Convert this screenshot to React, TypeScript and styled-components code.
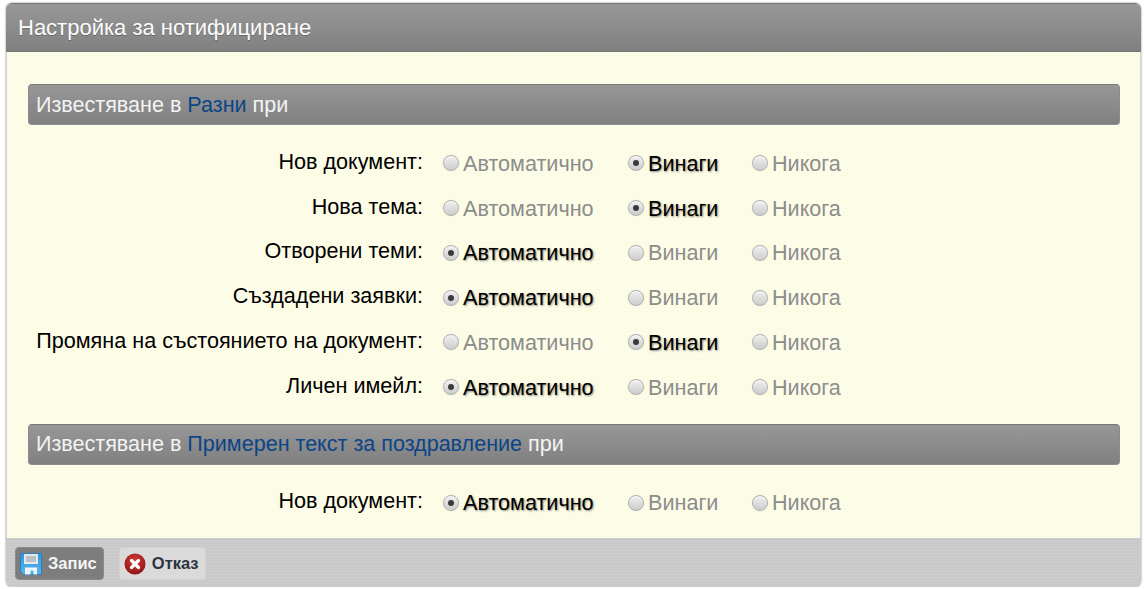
import React from "react";
import styled, { createGlobalStyle } from "styled-components";

const Global = createGlobalStyle`
  html, body { margin: 0; padding: 0; background: #fff; }
  body { font-family: "Liberation Sans", Arial, sans-serif; }
`;

const Panel = styled.div`
  box-sizing: border-box;
  width: 1135px;
  height: 584px;
  margin: 3px 0 0 6px;
  border-radius: 6px;
  overflow: hidden;
  display: flex;
  flex-direction: column;
  box-shadow: 0 0 2px rgba(0, 0, 0, 0.55);
`;

const Header = styled.div`
  box-sizing: border-box;
  height: 49px;
  flex: none;
  padding-left: 12px;
  display: flex;
  align-items: center;
  font-size: 22px;
  color: #fdfdfd;
  background: linear-gradient(#989898, #808080);
  border-top: 1px solid #777;
  border-bottom: 1px solid #777;
  text-shadow: 0 1px 0 rgba(70, 70, 70, 0.5);
`;

const Body = styled.div`
  flex: 1;
  min-height: 0;
  box-sizing: border-box;
  padding: 32px 20px 0 21px;
  border-left: 1px solid #d6d6d6;
  border-right: 1px solid #d6d6d6;
  background-color: #fcfce3;
  background-image:
    repeating-linear-gradient(0deg, rgba(255, 255, 255, 0.3) 0 1px, transparent 1px 3px),
    repeating-linear-gradient(90deg, rgba(255, 255, 255, 0.12) 0 2px, transparent 2px 5px);
`;

const Legend = styled.div`
  box-sizing: border-box;
  height: 41px;
  padding-left: 7px;
  display: flex;
  align-items: center;
  white-space: pre;
  font-size: 21.55px;
  color: #f4f4f4;
  border: 1px solid #8c8c8c;
  border-top-color: #777;
  border-radius: 4px;
  background: linear-gradient(#979797, #808080);
  box-shadow: 0 1px 0 rgba(255, 255, 255, 0.5);
`;

const LegendLink = styled.a`
  color: #0b4588;
`;

const Rows = styled.div<{ $rows: number }>`
  display: grid;
  grid-template-columns: 395px 185px 124px 1fr;
  grid-auto-rows: 44.75px;
  padding: 16.5px 0 ${(p) => (p.$rows > 1 ? "13.5px" : "0")};
`;

const Label = styled.div`
  justify-self: end;
  align-self: center;
  font-size: 21.6px;
  line-height: 25px;
  color: #000;
  margin-top: -5px;
`;

const Option = styled.label<{ $on: boolean }>`
  display: flex;
  align-items: center;
  padding-left: 20px;
  font-size: 21.6px;
  color: ${(p) => (p.$on ? "#000" : "#8c8c8c")};
  text-shadow: ${(p) => (p.$on ? "1px 1px 2px rgba(0,0,0,0.45)" : "none")};
`;

const Dot = styled.span<{ $on: boolean }>`
  box-sizing: border-box;
  width: 16px;
  height: 16px;
  margin-right: 4px;
  margin-top: -1px;
  flex: none;
  border-radius: 50%;
  border: 1px solid #b0b0b0;
  display: flex;
  align-items: center;
  justify-content: center;
  background: linear-gradient(#f0f0f0, #cccccc);
  box-shadow: inset 0 1px 1px rgba(255, 255, 255, 0.7), 0 0 1px rgba(0, 0, 0, 0.2);
  &::after {
    content: "";
    display: ${(p) => (p.$on ? "block" : "none")};
    width: 6px;
    height: 6px;
    border-radius: 50%;
    background: #3a3a3a;
  }
`;

const Footer = styled.div`
  height: 49px;
  flex: none;
  box-sizing: border-box;
  padding: 9px 9px 0;
  display: flex;
  align-items: flex-start;
  gap: 15px;
  background-color: #c9c9c9;
  background-image: repeating-linear-gradient(0deg, rgba(255, 255, 255, 0.08) 0 1px, transparent 1px 3px);
`;

const Btn = styled.button<{ $primary?: boolean }>`
  box-sizing: border-box;
  height: 33px;
  padding: 0 6px 0 4px;
  display: flex;
  align-items: center;
  gap: 6px;
  font-family: inherit;
  font-size: 16.5px;
  font-weight: bold;
  border-radius: 4px;
  border: 1px solid ${(p) => (p.$primary ? "#8a8a8a" : "#d2d2d2")};
  color: ${(p) => (p.$primary ? "#f5f5f5" : "#2b3440")};
  background: ${(p) => (p.$primary ? "#7d7d7d" : "#dadada")};
`;

const Save = () => (
  <svg width="22" height="22" viewBox="0 0 22 22">
    <defs>
      <linearGradient id="floppy" x1="0" y1="0" x2="0" y2="1">
        <stop offset="0" stopColor="#2f95d8" />
        <stop offset="1" stopColor="#5cb6ec" />
      </linearGradient>
    </defs>
    <path d="M0.5 0.5h21v21H3.5l-3-3z" fill="url(#floppy)" stroke="#2a7fbe" />
    <rect x="4" y="1" width="14" height="10" fill="#e4e8ea" />
    <path d="M6 4h10M6 6h10M6 8h10" stroke="#8f9aa2" />
    <path d="M5 21.5v-7h12v7h-3.5v-4h-3v4z" fill="#eef6fc" />
  </svg>
);

const Cancel = () => (
  <svg width="22" height="22" viewBox="0 0 22 22">
    <defs>
      <radialGradient id="ball" cx="0.5" cy="0.35" r="0.65">
        <stop offset="0" stopColor="#d63c3c" />
        <stop offset="1" stopColor="#8e1414" />
      </radialGradient>
    </defs>
    <circle cx="11" cy="11" r="10.5" fill="url(#ball)" />
    <path d="M7.5 7.5l7 7M14.5 7.5l-7 7" stroke="#fff" strokeWidth="3.2" strokeLinecap="round" />
  </svg>
);

const OPTS = ["Автоматично", "Винаги", "Никога"];

const Row = ({ label, sel }: { label: string; sel: number }) => (
  <>
    <Label>{label}:</Label>
    {OPTS.map((o, i) => (
      <Option key={o} $on={i === sel}>
        <Dot $on={i === sel} />
        {o}
      </Option>
    ))}
  </>
);

export default function App() {
  return (
    <>
      <Global />
      <Panel>
        <Header>Настройка за нотифициране</Header>
        <Body>
          <Legend>
            Известяване в <LegendLink>Разни</LegendLink> при
          </Legend>
          <Rows $rows={6}>
            <Row label="Нов документ" sel={1} />
            <Row label="Нова тема" sel={1} />
            <Row label="Отворени теми" sel={0} />
            <Row label="Създадени заявки" sel={0} />
            <Row label="Промяна на състоянието на документ" sel={1} />
            <Row label="Личен имейл" sel={0} />
          </Rows>
          <Legend>
            Известяване в <LegendLink>Примерен текст за поздравление</LegendLink> при
          </Legend>
          <Rows $rows={1}>
            <Row label="Нов документ" sel={0} />
          </Rows>
        </Body>
        <Footer>
          <Btn $primary>
            <Save />
            Запис
          </Btn>
          <Btn>
            <Cancel />
            Отказ
          </Btn>
        </Footer>
      </Panel>
    </>
  );
}
